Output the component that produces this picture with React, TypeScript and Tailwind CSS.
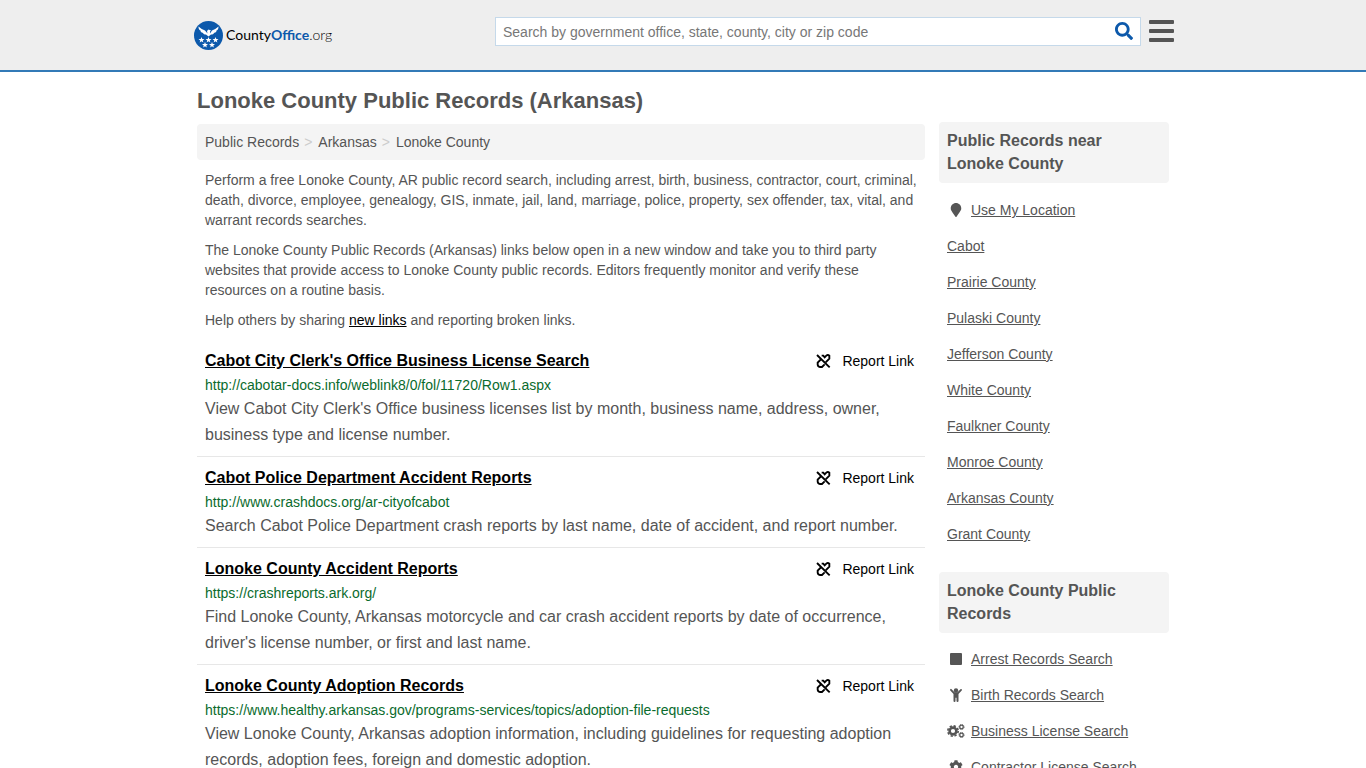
import React from 'react'
import { FaCog, FaMapMarker, FaSearch, FaSquareFull } from 'react-icons/fa'

const records = [
  {
    title: "Cabot City Clerk's Office Business License Search",
    url: 'http://cabotar-docs.info/weblink8/0/fol/11720/Row1.aspx',
    text: "View Cabot City Clerk's Office business licenses list by month, business name, address, owner, business type and license number.",
  },
  {
    title: 'Cabot Police Department Accident Reports',
    url: 'http://www.crashdocs.org/ar-cityofcabot',
    text: 'Search Cabot Police Department crash reports by last name, date of accident, and report number.',
  },
  {
    title: 'Lonoke County Accident Reports',
    url: 'https://crashreports.ark.org/',
    text: "Find Lonoke County, Arkansas motorcycle and car crash accident reports by date of occurrence, driver's license number, or first and last name.",
  },
  {
    title: 'Lonoke County Adoption Records',
    url: 'https://www.healthy.arkansas.gov/programs-services/topics/adoption-file-requests',
    text: 'View Lonoke County, Arkansas adoption information, including guidelines for requesting adoption records, adoption fees, foreign and domestic adoption.',
  },
]

const nearby = [
  'Cabot',
  'Prairie County',
  'Pulaski County',
  'Jefferson County',
  'White County',
  'Faulkner County',
  'Monroe County',
  'Arkansas County',
  'Grant County',
]

const categories = [
  { label: 'Arrest Records Search', icon: <FaSquareFull className="size-3 rounded-[1px]" /> },
  { label: 'Birth Records Search', icon: <ChildIcon /> },
  { label: 'Business License Search', icon: <CogsIcon /> },
  { label: 'Contractor License Search', icon: <FaCog className="size-[14px]" /> },
]

function Star({ x, y }: { x: number; y: number }) {
  return (
    <path
      transform={`translate(${x} ${y}) scale(1.25)`}
      d="M0-5 1.3-1.6 4.8-1.5 2 .7 3 4 0 2 -3 4 -2 .7 -4.8-1.5 -1.3-1.6Z"
    />
  )
}

function Logo() {
  return (
    <a href="#" aria-label="CountyOffice.org" className="flex items-center gap-[3px] text-black">
      <svg viewBox="0 0 58 58" className="size-[29px]" aria-hidden="true">
        <circle cx="29" cy="29" r="29" fill="#0c59ab" />
        <g fill="#fff">
          <path d="M9 11c4 4 9 6 13 8l5 6-1-5 3-3 5 2-2 2 0 4 4-6c4-2 9-4 13-8 0 4-1 7-4 8 0 3-2 4-5 5-1 2-3 3-6 3l-5 4-5-4c-3 0-5-1-6-3-3-1-5-2-5-5-3-1-4-4-4-8Z" />
          <Star x={15} y={38} />
          <Star x={29} y={38} />
          <Star x={43} y={38} />
          <Star x={22} y={48} />
          <Star x={36} y={48} />
        </g>
      </svg>
      <span className="font-['Lato','Liberation_Sans',sans-serif] text-sm">
        County<b className="text-[#0c59ab]">Office</b>
        <span className="font-light">.org</span>
      </span>
    </a>
  )
}

function MenuIcon() {
  return (
    <svg viewBox="0 0 25 22" className="h-[22px] w-[25px]" fill="currentColor" aria-hidden="true">
      <rect width="25" height="4" rx="1" />
      <rect y="9" width="25" height="4" rx="1" />
      <rect y="18" width="25" height="4" rx="1" />
    </svg>
  )
}

function BrokenLinkIcon() {
  return (
    <svg
      viewBox="0 0 24 24"
      className="size-4"
      fill="none"
      stroke="currentColor"
      strokeWidth="2.8"
      aria-hidden="true"
    >
      <path d="M3 3 22 21.5" />
      <path d="M10 4h2.5l2 2.5L17 4a3.2 3.2 0 0 1 4.5 0v4.5L16 14" />
      <path d="M9.5 9 4 14.500v3a4 4 0 0 0 4 3.500h2.500l4-4" />
    </svg>
  )
}

function ChildIcon() {
  return (
    <svg viewBox="0 0 14 14" className="size-[14px]" fill="currentColor" aria-hidden="true">
      <circle cx="7" cy="2.500" r="2.200" />
      <path d="M1.300 1.200a.9.9 0 0 1 1.300 0L5.500 4.300h3l2.900-3.100a.9.9 0 0 1 1.300 1.300L9.500 5.900v7a1 1 0 0 1-2 0V9.800h-1v3.100a1 1 0 0 1-2 0v-7L1.300 2.500a.9.9 0 0 1 0-1.300Z" />
    </svg>
  )
}

function CogsIcon() {
  return (
    <svg viewBox="0 0 18 14" className="h-[14px] w-[18px]" aria-hidden="true">
      <g fill="none" stroke="currentColor">
        <circle cx="6" cy="7" r="3.400" strokeWidth="2.600" />
        <circle cx="6" cy="7" r="5.200" strokeWidth="1.600" strokeDasharray="2.300 1.784" />
        <circle cx="14.500" cy="3" r="1.800" strokeWidth="1.300" />
        <circle cx="14.500" cy="11" r="1.800" strokeWidth="1.300" />
        <circle cx="14.500" cy="3" r="2.600" strokeWidth=".8" strokeDasharray="1.200 .842" />
        <circle cx="14.500" cy="11" r="2.600" strokeWidth=".8" strokeDasharray="1.200 .842" />
      </g>
    </svg>
  )
}

function SideTitle({ children }: { children: React.ReactNode }) {
  return <h2 className="rounded bg-[#f4f4f4] px-2 pt-[7px] pb-2 text-base leading-[23px] font-bold">{children}</h2>
}

function SideLink({ label, icon }: { label: string; icon?: React.ReactNode }) {
  return (
    <li className="flex h-9 items-center gap-[6px] px-2">
      {icon && <span className="flex w-[18px] justify-center">{icon}</span>}
      <a href="#" className="whitespace-nowrap underline">
        {label}
      </a>
    </li>
  )
}

export default function App() {
  return (
    <div className="bg-white font-['Liberation_Sans',Arial,sans-serif] text-sm text-[#555]">
      <header className="border-b-2 border-[#337ab7] bg-[#eee]">
        <div className="mx-auto flex h-[70px] max-w-[982px] items-center justify-between pl-[2px]">
          <Logo />
          <div className="mb-2 flex items-center gap-2">
            <form className="flex h-[29px] w-[646px] items-center border border-[#c5d9ea] bg-white pr-[7px]">
              <input
                type="text"
                aria-label="Search"
                placeholder="Search by government office, state, county, city or zip code"
                className="h-full flex-1 px-[7px] pt-[2px] outline-none placeholder:text-[#777]"
              />
              <button type="button" aria-label="Submit search" className="text-[#0c59ab]">
                <FaSearch className="size-[18px]" />
              </button>
            </form>
            <button type="button" aria-label="Menu">
              <MenuIcon />
            </button>
          </div>
        </div>
      </header>

      <div className="mx-auto flex max-w-[972px] gap-[14px]">
        <main className="flex-1">
          <h1 className="pt-[17px] pb-[11px] text-[22px] leading-6 font-bold">Lonoke County Public Records (Arkansas)</h1>

          <nav aria-label="Breadcrumb" className="rounded bg-[#f4f4f4] px-2 py-2">
            <ol className="flex">
              <li>
                <a href="#">Public Records</a>
                <span className="pr-[6px] pl-[5px] text-[#ccc]">&gt;</span>
              </li>
              <li>
                <a href="#">Arkansas</a>
                <span className="pr-[6px] pl-[5px] text-[#ccc]">&gt;</span>
              </li>
              <li>Lonoke County</li>
            </ol>
          </nav>

          <div className="space-y-[10px] px-2 py-[10px]">
            <p>
              Perform a free Lonoke County, AR public record search, including arrest, birth, business, contractor,
              court, criminal, death, divorce, employee, genealogy, GIS, inmate, jail, land, marriage, police, property,
              sex offender, tax, vital, and warrant records searches.
            </p>
            <p>
              The Lonoke County Public Records (Arkansas) links below open in a new window and take you to third party
              websites that provide access to Lonoke County public records. Editors frequently monitor and verify these
              resources on a routine basis.
            </p>
            <p>
              Help others by sharing{' '}
              <a href="#" className="text-black underline">
                new links
              </a>{' '}
              and reporting broken links.
            </p>
          </div>

          <ul>
            {records.map((record) => (
              <li key={record.url} className="border-b border-[#e7e7e7] px-2 py-2">
                <div className="flex items-center justify-between text-black">
                  <a href="#" className="text-base leading-[26px] font-bold underline">
                    {record.title}
                  </a>
                  <button type="button" className="mr-[3px] flex items-center gap-[11px]">
                    <BrokenLinkIcon />
                    Report Link
                  </button>
                </div>
                <div className="leading-[22px] text-[#0a6b2d]">{record.url}</div>
                <p className="text-base leading-[26px]">{record.text}</p>
              </li>
            ))}
          </ul>
        </main>

        <aside className="w-[230px] pt-[50px]">
          <SideTitle>Public Records near Lonoke County</SideTitle>
          <ul className="pt-[9px] pb-5">
            <SideLink label="Use My Location" icon={<FaMapMarker className="size-[14px]" />} />
            {nearby.map((place) => (
              <SideLink key={place} label={place} />
            ))}
          </ul>
          <SideTitle>Lonoke County Public Records</SideTitle>
          <ul className="pt-2">
            {categories.map((category) => (
              <SideLink key={category.label} label={category.label} icon={category.icon} />
            ))}
          </ul>
        </aside>
      </div>
    </div>
  )
}
